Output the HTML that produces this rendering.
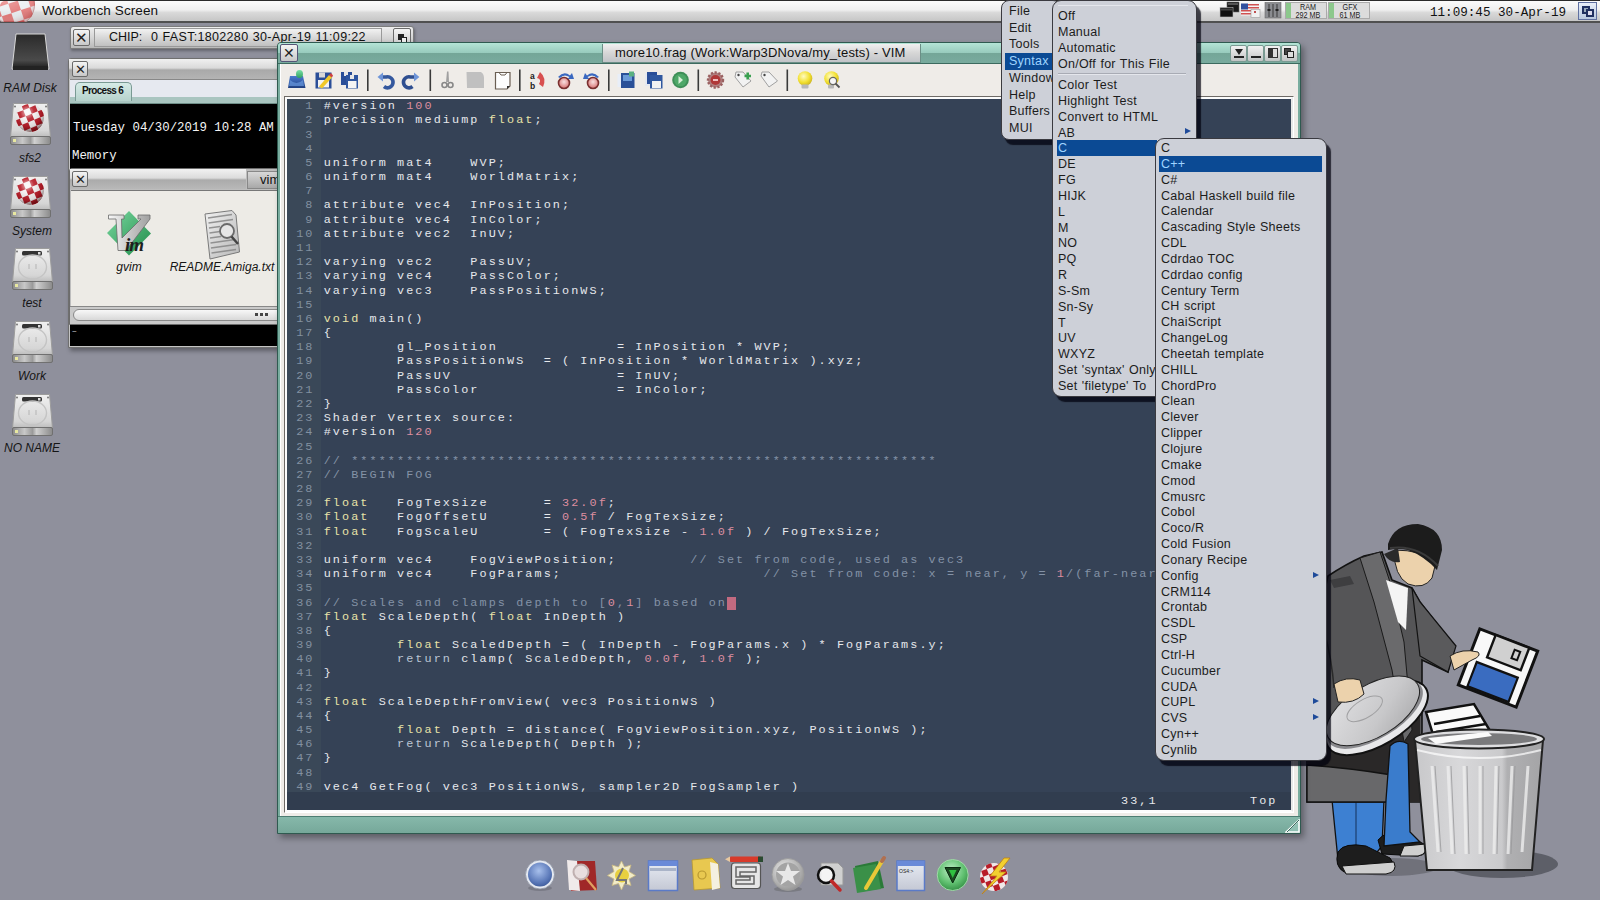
<!DOCTYPE html><html><head><meta charset="utf-8"><style>
*{margin:0;padding:0;box-sizing:border-box}
html,body{width:1600px;height:900px;overflow:hidden;background:#8f909c;font-family:"Liberation Sans",sans-serif;position:relative}
.a{position:absolute}
.code{position:absolute;white-space:pre;font-family:"Liberation Mono",monospace;font-size:11.8px;letter-spacing:2.085px;color:#e6e8ec;line-height:14px;height:14px}
.ln{color:#8290a0}
.k{color:#e8e2a8}
.n{color:#dc8ea0}
.c{color:#8492a6}
.r{color:#bcc6d4}
.mi{position:absolute;font-size:12.5px;letter-spacing:0.25px;word-spacing:0.6px;color:#1c1c1c;white-space:pre;line-height:16px}
.hl{background:#0b4a94;color:#9fd4ff}
.lbl{position:absolute;font-style:italic;font-size:12px;color:#151515;white-space:nowrap;text-align:center}
.btn{position:absolute;background:linear-gradient(#f4f4f4,#dcdcdc 55%,#c8c8c8);border:1px solid #6a6a6a;border-radius:2px}
.x{position:absolute;font-size:15px;line-height:15px;color:#222;text-align:center;width:100%}
</style></head><body>
<div class="a" style="left:0;top:0;width:1600px;height:23px;background:linear-gradient(#fbfbfb,#efefef 45%,#d9d9d9 58%,#c6c6c6);border-top:1px solid #2a2a2a;border-bottom:2px solid #505050"></div>
<div class="a" style="left:0;top:1px;width:38px;height:21px;overflow:hidden;border-radius:5px 0 0 0">
<svg width="38" height="21" viewBox="0 0 38 21"><defs><clipPath id="tbc"><circle cx="14" cy="4" r="21"/></clipPath>
<radialGradient id="tbs" cx=".3" cy=".2" r=".8"><stop offset="0" stop-color="#fff" stop-opacity=".35"/><stop offset=".7" stop-color="#fff" stop-opacity="0"/><stop offset="1" stop-color="#800" stop-opacity=".25"/></radialGradient></defs>
<g clip-path="url(#tbc)" opacity=".75"><rect x="-10" y="-20" width="60" height="50" fill="#e8eef2"/><g transform="rotate(-18 14 4)"><rect x="-21" y="-29" width="10" height="10" fill="#e05a5a"/><rect x="-21" y="-9" width="10" height="10" fill="#e05a5a"/><rect x="-21" y="11" width="10" height="10" fill="#e05a5a"/><rect x="-21" y="31" width="10" height="10" fill="#e05a5a"/><rect x="-11" y="-19" width="10" height="10" fill="#e05a5a"/><rect x="-11" y="1" width="10" height="10" fill="#e05a5a"/><rect x="-11" y="21" width="10" height="10" fill="#e05a5a"/><rect x="-1" y="-29" width="10" height="10" fill="#e05a5a"/><rect x="-1" y="-9" width="10" height="10" fill="#e05a5a"/><rect x="-1" y="11" width="10" height="10" fill="#e05a5a"/><rect x="-1" y="31" width="10" height="10" fill="#e05a5a"/><rect x="9" y="-19" width="10" height="10" fill="#e05a5a"/><rect x="9" y="1" width="10" height="10" fill="#e05a5a"/><rect x="9" y="21" width="10" height="10" fill="#e05a5a"/><rect x="19" y="-29" width="10" height="10" fill="#e05a5a"/><rect x="19" y="-9" width="10" height="10" fill="#e05a5a"/><rect x="19" y="11" width="10" height="10" fill="#e05a5a"/><rect x="19" y="31" width="10" height="10" fill="#e05a5a"/><rect x="29" y="-19" width="10" height="10" fill="#e05a5a"/><rect x="29" y="1" width="10" height="10" fill="#e05a5a"/><rect x="29" y="21" width="10" height="10" fill="#e05a5a"/><rect x="39" y="-29" width="10" height="10" fill="#e05a5a"/><rect x="39" y="-9" width="10" height="10" fill="#e05a5a"/><rect x="39" y="11" width="10" height="10" fill="#e05a5a"/><rect x="39" y="31" width="10" height="10" fill="#e05a5a"/></g><circle cx="14" cy="4" r="21" fill="url(#tbs)"/></g>
<circle cx="14" cy="4" r="20.5" fill="none" stroke="#a05050" stroke-width=".8" opacity=".5"/></svg></div>
<div class="a" style="left:42px;top:3px;font-size:13.5px;color:#111;letter-spacing:0.1px">Workbench Screen</div>
<svg class="a" style="left:1218px;top:1px" width="64" height="20" viewBox="1218 1 64 20">
<rect x="1227" y="2" width="12" height="10" fill="#1a1a1a" stroke="#666" stroke-width=".6"/><rect x="1228" y="3" width="10" height="2" fill="#555"/>
<rect x="1220" y="7.5" width="13" height="9.5" fill="#101010" stroke="#bbb" stroke-width=".6"/><rect x="1221" y="8.5" width="11" height="2" fill="#444"/>
<rect x="1241" y="3.5" width="18" height="12" fill="#f4f4f4"/><g fill="#d05050"><rect x="1241" y="4" width="18" height="1.5"/><rect x="1241" y="7" width="18" height="1.5"/><rect x="1241" y="10" width="18" height="1.5"/><rect x="1241" y="13" width="18" height="1.5"/></g>
<rect x="1241" y="3.5" width="7" height="6" fill="#3050a0"/><rect x="1251" y="9.5" width="9" height="8" fill="#f0f0f0" stroke="#999" stroke-width=".6"/><rect x="1254" y="11" width="2" height="2" fill="#c05050"/>
<rect x="1265" y="2.5" width="16" height="15.5" fill="#8a8c90" stroke="#6a6a6a" stroke-width=".6"/><path d="M1269 4 L1269 17 M1273 4 L1273 17 M1277 4 L1277 17" stroke="#3a3a3a" stroke-width="1"/><rect x="1267.5" y="9" width="3" height="2" fill="#222"/><rect x="1275.5" y="9" width="3" height="2" fill="#222"/>
</svg>
<div class="a" style="left:1285px;top:2px;width:42px;height:17px;background:#dcdcdc;border:1px solid #aaa"></div>
<div class="a" style="left:1286px;top:3px;width:5px;height:15px;background:#8cc88c"></div>
<div class="a" style="left:1291px;top:2.5px;font-size:8.5px;line-height:8px;color:#222;text-align:center;width:34px;transform:scaleX(.85)">RAM<br>292 MB</div>
<div class="a" style="left:1328px;top:2px;width:42px;height:17px;background:#dcdcdc;border:1px solid #aaa"></div>
<div class="a" style="left:1329px;top:3px;width:5px;height:15px;background:#8cc88c"></div>
<div class="a" style="left:1333px;top:2.5px;font-size:8.5px;line-height:8px;color:#222;text-align:center;width:34px;transform:scaleX(.85)">GFX<br>61 MB</div>
<div class="a" style="left:1430px;top:5.5px;font-family:'Liberation Mono',monospace;font-size:12.6px;color:#111;letter-spacing:0px">11:09:45 30-Apr-19</div>
<div class="a" style="left:1578px;top:2px;width:19px;height:18px;background:linear-gradient(#e8eef8,#b8c8e0);border:1px solid #6070a0"></div>
<div class="a" style="left:1582px;top:6px;width:8px;height:8px;border:2px solid #203060;background:#9ab"></div>
<div class="a" style="left:1586px;top:9px;width:8px;height:8px;border:2px solid #203060;background:#dde"></div>
<div class="a" style="left:10px;top:33px;width:41px;height:40px"><svg width="41" height="40" viewBox="0 0 41 40">
<defs><linearGradient id="rg" x1="0" y1="0" x2="0" y2="1"><stop offset="0" stop-color="#2a2a2a"/><stop offset=".75" stop-color="#4a4a4a"/><stop offset="1" stop-color="#1a1a1a"/></linearGradient></defs>
<path d="M6 1 L35 1 L39 36 L2 36Z" fill="url(#rg)" stroke="#d8d8d8" stroke-width="1"/><rect x="3" y="33" width="35" height="4" fill="#222"/></svg></div>
<div class="lbl" style="left:0;top:80.5px;width:60px">RAM Disk</div>
<div class="a" style="left:10px;top:103px;width:41px;height:42px"><svg width="41" height="42" viewBox="0 0 41 42"><defs><linearGradient id="hgd10_103" x1="0" y1="0" x2="0" y2="1"><stop offset="0" stop-color="#f0f0f0"/><stop offset="0.8" stop-color="#d6d6d6"/><stop offset="1" stop-color="#bcbcbc"/></linearGradient><linearGradient id="hsd10_103" x1="0" y1="0" x2="1" y2="0"><stop offset="0" stop-color="#8a8a8a"/><stop offset=".3" stop-color="#c8c8c8"/><stop offset=".5" stop-color="#9a9a9a"/><stop offset=".6" stop-color="#d0d0d0"/><stop offset="1" stop-color="#8a8a8a"/></linearGradient></defs><path d="M3.5 0.5 L37.5 0.5 L40.5 34 L0.5 34Z" fill="url(#hgd10_103)" stroke="#9c9c9c" stroke-width="1"/><rect x="0.5" y="33.5" width="40" height="8" rx="1.5" fill="url(#hsd10_103)" stroke="#707070" stroke-width="1"/><rect x="3" y="36" width="3" height="3" fill="#e8e8a0"/><circle cx="5" cy="3.5" r="1" fill="#777"/><circle cx="36" cy="3.5" r="1" fill="#777"/><defs><clipPath id="bcd10_103"><circle cx="20" cy="15" r="14"/></clipPath><radialGradient id="shd10_103" cx=".4" cy=".3" r=".7"><stop offset="0" stop-color="#fff" stop-opacity=".75"/><stop offset=".35" stop-color="#fff" stop-opacity=".1"/><stop offset=".75" stop-color="#000" stop-opacity=".1"/><stop offset="1" stop-color="#300" stop-opacity=".55"/></radialGradient></defs><g clip-path="url(#bcd10_103)"><rect x="0" y="0" width="41" height="34" fill="#f4f0f0"/><g transform="rotate(-22 20 15)"><rect x="-9.2" y="-14.2" width="6.5" height="6.5" fill="#b81c28"/><rect x="-9.2" y="-1.2" width="6.5" height="6.5" fill="#b81c28"/><rect x="-9.2" y="11.8" width="6.5" height="6.5" fill="#b81c28"/><rect x="-9.2" y="24.8" width="6.5" height="6.5" fill="#b81c28"/><rect x="-9.2" y="37.8" width="6.5" height="6.5" fill="#b81c28"/><rect x="-2.8" y="-7.8" width="6.5" height="6.5" fill="#b81c28"/><rect x="-2.8" y="5.2" width="6.5" height="6.5" fill="#b81c28"/><rect x="-2.8" y="18.2" width="6.5" height="6.5" fill="#b81c28"/><rect x="-2.8" y="31.2" width="6.5" height="6.5" fill="#b81c28"/><rect x="3.8" y="-14.2" width="6.5" height="6.5" fill="#b81c28"/><rect x="3.8" y="-1.2" width="6.5" height="6.5" fill="#b81c28"/><rect x="3.8" y="11.8" width="6.5" height="6.5" fill="#b81c28"/><rect x="3.8" y="24.8" width="6.5" height="6.5" fill="#b81c28"/><rect x="3.8" y="37.8" width="6.5" height="6.5" fill="#b81c28"/><rect x="10.2" y="-7.8" width="6.5" height="6.5" fill="#b81c28"/><rect x="10.2" y="5.2" width="6.5" height="6.5" fill="#b81c28"/><rect x="10.2" y="18.2" width="6.5" height="6.5" fill="#b81c28"/><rect x="10.2" y="31.2" width="6.5" height="6.5" fill="#b81c28"/><rect x="16.8" y="-14.2" width="6.5" height="6.5" fill="#b81c28"/><rect x="16.8" y="-1.2" width="6.5" height="6.5" fill="#b81c28"/><rect x="16.8" y="11.8" width="6.5" height="6.5" fill="#b81c28"/><rect x="16.8" y="24.8" width="6.5" height="6.5" fill="#b81c28"/><rect x="16.8" y="37.8" width="6.5" height="6.5" fill="#b81c28"/><rect x="23.2" y="-7.8" width="6.5" height="6.5" fill="#b81c28"/><rect x="23.2" y="5.2" width="6.5" height="6.5" fill="#b81c28"/><rect x="23.2" y="18.2" width="6.5" height="6.5" fill="#b81c28"/><rect x="23.2" y="31.2" width="6.5" height="6.5" fill="#b81c28"/><rect x="29.8" y="-14.2" width="6.5" height="6.5" fill="#b81c28"/><rect x="29.8" y="-1.2" width="6.5" height="6.5" fill="#b81c28"/><rect x="29.8" y="11.8" width="6.5" height="6.5" fill="#b81c28"/><rect x="29.8" y="24.8" width="6.5" height="6.5" fill="#b81c28"/><rect x="29.8" y="37.8" width="6.5" height="6.5" fill="#b81c28"/><rect x="36.2" y="-7.8" width="6.5" height="6.5" fill="#b81c28"/><rect x="36.2" y="5.2" width="6.5" height="6.5" fill="#b81c28"/><rect x="36.2" y="18.2" width="6.5" height="6.5" fill="#b81c28"/><rect x="36.2" y="31.2" width="6.5" height="6.5" fill="#b81c28"/><rect x="42.8" y="-14.2" width="6.5" height="6.5" fill="#b81c28"/><rect x="42.8" y="-1.2" width="6.5" height="6.5" fill="#b81c28"/><rect x="42.8" y="11.8" width="6.5" height="6.5" fill="#b81c28"/><rect x="42.8" y="24.8" width="6.5" height="6.5" fill="#b81c28"/><rect x="42.8" y="37.8" width="6.5" height="6.5" fill="#b81c28"/></g><circle cx="20" cy="15" r="14" fill="url(#shd10_103)"/></g></svg></div><div class="lbl" style="left:0;top:151px;width:60px">sfs2</div>
<div class="a" style="left:10px;top:176px;width:41px;height:42px"><svg width="41" height="42" viewBox="0 0 41 42"><defs><linearGradient id="hgd10_176" x1="0" y1="0" x2="0" y2="1"><stop offset="0" stop-color="#f0f0f0"/><stop offset="0.8" stop-color="#d6d6d6"/><stop offset="1" stop-color="#bcbcbc"/></linearGradient><linearGradient id="hsd10_176" x1="0" y1="0" x2="1" y2="0"><stop offset="0" stop-color="#8a8a8a"/><stop offset=".3" stop-color="#c8c8c8"/><stop offset=".5" stop-color="#9a9a9a"/><stop offset=".6" stop-color="#d0d0d0"/><stop offset="1" stop-color="#8a8a8a"/></linearGradient></defs><path d="M3.5 0.5 L37.5 0.5 L40.5 34 L0.5 34Z" fill="url(#hgd10_176)" stroke="#9c9c9c" stroke-width="1"/><rect x="0.5" y="33.5" width="40" height="8" rx="1.5" fill="url(#hsd10_176)" stroke="#707070" stroke-width="1"/><rect x="3" y="36" width="3" height="3" fill="#e8e8a0"/><circle cx="5" cy="3.5" r="1" fill="#777"/><circle cx="36" cy="3.5" r="1" fill="#777"/><defs><clipPath id="bcd10_176"><circle cx="20" cy="15" r="14"/></clipPath><radialGradient id="shd10_176" cx=".4" cy=".3" r=".7"><stop offset="0" stop-color="#fff" stop-opacity=".75"/><stop offset=".35" stop-color="#fff" stop-opacity=".1"/><stop offset=".75" stop-color="#000" stop-opacity=".1"/><stop offset="1" stop-color="#300" stop-opacity=".55"/></radialGradient></defs><g clip-path="url(#bcd10_176)"><rect x="0" y="0" width="41" height="34" fill="#f4f0f0"/><g transform="rotate(-22 20 15)"><rect x="-9.2" y="-14.2" width="6.5" height="6.5" fill="#b81c28"/><rect x="-9.2" y="-1.2" width="6.5" height="6.5" fill="#b81c28"/><rect x="-9.2" y="11.8" width="6.5" height="6.5" fill="#b81c28"/><rect x="-9.2" y="24.8" width="6.5" height="6.5" fill="#b81c28"/><rect x="-9.2" y="37.8" width="6.5" height="6.5" fill="#b81c28"/><rect x="-2.8" y="-7.8" width="6.5" height="6.5" fill="#b81c28"/><rect x="-2.8" y="5.2" width="6.5" height="6.5" fill="#b81c28"/><rect x="-2.8" y="18.2" width="6.5" height="6.5" fill="#b81c28"/><rect x="-2.8" y="31.2" width="6.5" height="6.5" fill="#b81c28"/><rect x="3.8" y="-14.2" width="6.5" height="6.5" fill="#b81c28"/><rect x="3.8" y="-1.2" width="6.5" height="6.5" fill="#b81c28"/><rect x="3.8" y="11.8" width="6.5" height="6.5" fill="#b81c28"/><rect x="3.8" y="24.8" width="6.5" height="6.5" fill="#b81c28"/><rect x="3.8" y="37.8" width="6.5" height="6.5" fill="#b81c28"/><rect x="10.2" y="-7.8" width="6.5" height="6.5" fill="#b81c28"/><rect x="10.2" y="5.2" width="6.5" height="6.5" fill="#b81c28"/><rect x="10.2" y="18.2" width="6.5" height="6.5" fill="#b81c28"/><rect x="10.2" y="31.2" width="6.5" height="6.5" fill="#b81c28"/><rect x="16.8" y="-14.2" width="6.5" height="6.5" fill="#b81c28"/><rect x="16.8" y="-1.2" width="6.5" height="6.5" fill="#b81c28"/><rect x="16.8" y="11.8" width="6.5" height="6.5" fill="#b81c28"/><rect x="16.8" y="24.8" width="6.5" height="6.5" fill="#b81c28"/><rect x="16.8" y="37.8" width="6.5" height="6.5" fill="#b81c28"/><rect x="23.2" y="-7.8" width="6.5" height="6.5" fill="#b81c28"/><rect x="23.2" y="5.2" width="6.5" height="6.5" fill="#b81c28"/><rect x="23.2" y="18.2" width="6.5" height="6.5" fill="#b81c28"/><rect x="23.2" y="31.2" width="6.5" height="6.5" fill="#b81c28"/><rect x="29.8" y="-14.2" width="6.5" height="6.5" fill="#b81c28"/><rect x="29.8" y="-1.2" width="6.5" height="6.5" fill="#b81c28"/><rect x="29.8" y="11.8" width="6.5" height="6.5" fill="#b81c28"/><rect x="29.8" y="24.8" width="6.5" height="6.5" fill="#b81c28"/><rect x="29.8" y="37.8" width="6.5" height="6.5" fill="#b81c28"/><rect x="36.2" y="-7.8" width="6.5" height="6.5" fill="#b81c28"/><rect x="36.2" y="5.2" width="6.5" height="6.5" fill="#b81c28"/><rect x="36.2" y="18.2" width="6.5" height="6.5" fill="#b81c28"/><rect x="36.2" y="31.2" width="6.5" height="6.5" fill="#b81c28"/><rect x="42.8" y="-14.2" width="6.5" height="6.5" fill="#b81c28"/><rect x="42.8" y="-1.2" width="6.5" height="6.5" fill="#b81c28"/><rect x="42.8" y="11.8" width="6.5" height="6.5" fill="#b81c28"/><rect x="42.8" y="24.8" width="6.5" height="6.5" fill="#b81c28"/><rect x="42.8" y="37.8" width="6.5" height="6.5" fill="#b81c28"/></g><circle cx="20" cy="15" r="14" fill="url(#shd10_176)"/></g></svg></div><div class="lbl" style="left:0;top:224px;width:64px">System</div>
<div class="a" style="left:12px;top:248px;width:41px;height:42px"><svg width="41" height="42" viewBox="0 0 41 42"><defs><linearGradient id="hgd12_248" x1="0" y1="0" x2="0" y2="1"><stop offset="0" stop-color="#f0f0f0"/><stop offset="0.8" stop-color="#d6d6d6"/><stop offset="1" stop-color="#bcbcbc"/></linearGradient><linearGradient id="hsd12_248" x1="0" y1="0" x2="1" y2="0"><stop offset="0" stop-color="#8a8a8a"/><stop offset=".3" stop-color="#c8c8c8"/><stop offset=".5" stop-color="#9a9a9a"/><stop offset=".6" stop-color="#d0d0d0"/><stop offset="1" stop-color="#8a8a8a"/></linearGradient></defs><path d="M3.5 0.5 L37.5 0.5 L40.5 34 L0.5 34Z" fill="url(#hgd12_248)" stroke="#9c9c9c" stroke-width="1"/><rect x="0.5" y="33.5" width="40" height="8" rx="1.5" fill="url(#hsd12_248)" stroke="#707070" stroke-width="1"/><rect x="3" y="36" width="3" height="3" fill="#e8e8a0"/><circle cx="5" cy="3.5" r="1" fill="#777"/><circle cx="36" cy="3.5" r="1" fill="#777"/><rect x="10" y="3" width="20" height="4.5" rx="1.5" fill="#333"/><rect x="26" y="4" width="2.5" height="2.5" fill="#ddd"/><ellipse cx="20.5" cy="19" rx="14" ry="12" fill="none" stroke="#c4c4c4" stroke-width="1.4"/><path d="M17 16 L17 21 M24 16 L24 21" stroke="#bbb" stroke-width="1.2"/></svg></div><div class="lbl" style="left:0;top:296px;width:64px">test</div>
<div class="a" style="left:12px;top:321px;width:41px;height:42px"><svg width="41" height="42" viewBox="0 0 41 42"><defs><linearGradient id="hgd12_321" x1="0" y1="0" x2="0" y2="1"><stop offset="0" stop-color="#f0f0f0"/><stop offset="0.8" stop-color="#d6d6d6"/><stop offset="1" stop-color="#bcbcbc"/></linearGradient><linearGradient id="hsd12_321" x1="0" y1="0" x2="1" y2="0"><stop offset="0" stop-color="#8a8a8a"/><stop offset=".3" stop-color="#c8c8c8"/><stop offset=".5" stop-color="#9a9a9a"/><stop offset=".6" stop-color="#d0d0d0"/><stop offset="1" stop-color="#8a8a8a"/></linearGradient></defs><path d="M3.5 0.5 L37.5 0.5 L40.5 34 L0.5 34Z" fill="url(#hgd12_321)" stroke="#9c9c9c" stroke-width="1"/><rect x="0.5" y="33.5" width="40" height="8" rx="1.5" fill="url(#hsd12_321)" stroke="#707070" stroke-width="1"/><rect x="3" y="36" width="3" height="3" fill="#e8e8a0"/><circle cx="5" cy="3.5" r="1" fill="#777"/><circle cx="36" cy="3.5" r="1" fill="#777"/><rect x="10" y="3" width="20" height="4.5" rx="1.5" fill="#333"/><rect x="26" y="4" width="2.5" height="2.5" fill="#ddd"/><ellipse cx="20.5" cy="19" rx="14" ry="12" fill="none" stroke="#c4c4c4" stroke-width="1.4"/><path d="M17 16 L17 21 M24 16 L24 21" stroke="#bbb" stroke-width="1.2"/></svg></div><div class="lbl" style="left:0;top:369px;width:64px">Work</div>
<div class="a" style="left:12px;top:394px;width:41px;height:42px"><svg width="41" height="42" viewBox="0 0 41 42"><defs><linearGradient id="hgd12_394" x1="0" y1="0" x2="0" y2="1"><stop offset="0" stop-color="#f0f0f0"/><stop offset="0.8" stop-color="#d6d6d6"/><stop offset="1" stop-color="#bcbcbc"/></linearGradient><linearGradient id="hsd12_394" x1="0" y1="0" x2="1" y2="0"><stop offset="0" stop-color="#8a8a8a"/><stop offset=".3" stop-color="#c8c8c8"/><stop offset=".5" stop-color="#9a9a9a"/><stop offset=".6" stop-color="#d0d0d0"/><stop offset="1" stop-color="#8a8a8a"/></linearGradient></defs><path d="M3.5 0.5 L37.5 0.5 L40.5 34 L0.5 34Z" fill="url(#hgd12_394)" stroke="#9c9c9c" stroke-width="1"/><rect x="0.5" y="33.5" width="40" height="8" rx="1.5" fill="url(#hsd12_394)" stroke="#707070" stroke-width="1"/><rect x="3" y="36" width="3" height="3" fill="#e8e8a0"/><circle cx="5" cy="3.5" r="1" fill="#777"/><circle cx="36" cy="3.5" r="1" fill="#777"/><rect x="10" y="3" width="20" height="4.5" rx="1.5" fill="#333"/><rect x="26" y="4" width="2.5" height="2.5" fill="#ddd"/><ellipse cx="20.5" cy="19" rx="14" ry="12" fill="none" stroke="#c4c4c4" stroke-width="1.4"/><path d="M17 16 L17 21 M24 16 L24 21" stroke="#bbb" stroke-width="1.2"/></svg></div><div class="lbl" style="left:0;top:441px;width:64px">NO NAME</div>
<div class="a" style="left:70px;top:26px;width:344px;height:23px;background:linear-gradient(#eee,#d6d6d6 50%,#b9b9b9);border:1px solid #7c7c7c;border-radius:3px 3px 0 0;box-shadow:1px 2px 3px rgba(0,0,0,.3)"></div>
<div class="btn" style="left:73px;top:29px;width:17px;height:17px"><div class="x" style="top:0">&#x2715;</div></div>
<div class="a" style="left:94px;top:28px;width:288px;height:19px;background:linear-gradient(#f2f2f2,#d8d8d8 50%,#c0c0c0);border:1px solid #999"></div>
<div class="a" style="left:109px;top:30px;font-size:12.5px;color:#111;white-space:pre;letter-spacing:0px">CHIP:</div><div class="a" style="left:151px;top:30px;font-size:12.5px;color:#111;white-space:pre;letter-spacing:0.32px;word-spacing:0.5px">0 FAST:1802280 30-Apr-19 11:09:22</div>
<div class="btn" style="left:393px;top:28px;width:18px;height:19px"></div><div class="a" style="left:397.5px;top:33.5px;width:6px;height:6px;background:#222"></div><div class="a" style="left:400.5px;top:36.5px;width:6px;height:6px;background:#eee;border:1px solid #222"></div>
<div class="a" style="left:68px;top:58px;width:220px;height:290px;background:#c4c4c4;border:1px solid #6f6f6f;border-radius:3px 3px 0 0;box-shadow:2px 3px 4px rgba(0,0,0,.35)"></div>
<div class="a" style="left:69px;top:59px;width:218px;height:20px;background:linear-gradient(#f0f0f0,#dadada 45%,#a9a9a9 55%,#b4b4b4)"></div>
<div class="btn" style="left:72px;top:61px;width:16px;height:16px"><div class="x" style="top:0;font-size:13px">&#x2715;</div></div>
<div class="a" style="left:70px;top:79px;width:217px;height:25px;background:#e6e9f0;border-top:1px solid #888"></div>
<div class="a" style="left:70px;top:97px;width:217px;height:7px;background:#a9c5c0;border-bottom:1px solid #6e8e88"></div>
<div class="a" style="left:75px;top:82px;width:57px;height:19px;background:linear-gradient(#d6ebe7,#b6d2cc);border:1px solid #7a9a94;border-bottom:none;border-radius:5px 5px 0 0"></div>
<div class="a" style="left:82px;top:84px;font-size:10.5px;font-weight:bold;color:#111;letter-spacing:-0.7px;transform:scaleX(.95);transform-origin:0 0">Process 6</div>
<div class="a" style="left:70px;top:104px;width:217px;height:242px;background:#000"></div>
<div class="a" style="left:73px;top:120.5px;font-family:'Liberation Mono',monospace;font-size:12.4px;color:#f4f4f4;white-space:pre;letter-spacing:0px">Tuesday 04/30/2019 10:28 AM</div>
<div class="a" style="left:72px;top:148.5px;font-family:'Liberation Mono',monospace;font-size:12.4px;color:#f4f4f4;white-space:pre">Memory</div>
<div class="a" style="left:69px;top:168px;width:218px;height:157px;background:#bdbdbd;border:1px solid #6c6c6c;border-radius:3px 3px 0 0"></div>
<div class="a" style="left:70px;top:169px;width:176px;height:20px;background:linear-gradient(#f2f2f2,#dcdcdc 45%,#ababab 55%,#b8b8b8)"></div>
<div class="btn" style="left:72px;top:171px;width:16px;height:16px"><div class="x" style="top:0;font-size:13px">&#x2715;</div></div>
<div class="a" style="left:247px;top:171px;width:40px;height:18px;background:linear-gradient(#d8d8d8,#a8a8a8);border:1px solid #888"></div>
<div class="a" style="left:260px;top:172px;font-size:13px;color:#111">vim</div>
<div class="a" style="left:71px;top:190px;width:216px;height:116px;background:#edebe6;border-top:1px solid #777"></div>
<div class="a" style="left:70px;top:306px;width:217px;height:18px;background:#c9c9c9;border-top:1px solid #888"></div>
<div class="a" style="left:73px;top:309px;width:220px;height:12px;background:linear-gradient(#f8f8f8,#d8d8d8);border:1px solid #8a8a8a;border-radius:6px"></div>
<div class="a" style="left:255px;top:313px;width:3px;height:3px;background:#444"></div><div class="a" style="left:260px;top:313px;width:3px;height:3px;background:#444"></div><div class="a" style="left:265px;top:313px;width:3px;height:3px;background:#444"></div>
<div class="a" style="left:70px;top:325px;width:217px;height:21px;background:#000"></div>
<div class="a" style="left:72px;top:327px;font-size:8px;color:#ddd">~</div>
<svg class="a" style="left:100px;top:205px" width="150" height="58" viewBox="100 205 150 58">
<defs><linearGradient id="vg1" x1="0" y1="0" x2="1" y2="1"><stop offset="0" stop-color="#7ad8a0"/><stop offset="1" stop-color="#1e8a48"/></linearGradient>
<linearGradient id="vg2" x1="0" y1="0" x2="1" y2="0"><stop offset="0" stop-color="#f8f8f8"/><stop offset=".5" stop-color="#c8c8c8"/><stop offset="1" stop-color="#a0a0a0"/></linearGradient>
<linearGradient id="rg1" x1="0" y1="0" x2="1" y2="1"><stop offset="0" stop-color="#f0f0f0"/><stop offset="1" stop-color="#b8b8b8"/></linearGradient></defs>
<path d="M129 211 L151 233.5 L129 255.5 L107 233Z" fill="url(#vg1)"/>
<path d="M108.5 215 L124 215 L124 219 L121.5 219 L122 238 L141 219 L138 219 L138 215 L150 215 L150 219 L126 250.5 L118 250.5 L116 219 L108.5 219Z" fill="url(#vg2)" stroke="#6a6a6a" stroke-width=".8"/>
<text x="125" y="251" font-family="Liberation Serif" font-style="italic" font-weight="bold" font-size="19" fill="#1e1e1e" letter-spacing="-1">im</text>
<path d="M205 214 L232 210.5 L236 215 L239.5 252 L210 259 Z" fill="url(#rg1)" stroke="#7a7a7a" stroke-width="1"/>
<g stroke="#8a8a8a" stroke-width="1.6" opacity=".9"><path d="M208 218 L232 214.5 M208.5 223 L233 219.5 M209 228 L220 226.5 M209.5 233 L220 231.5 M210 238 L221 236.5 M210.5 243 L235 239.5 M211 248 L236 244.5 M211.5 253 L236 249.5"/></g>
<circle cx="227" cy="231" r="7" fill="#e6e6e6" stroke="#6a6a6a" stroke-width="1.8"/><path d="M231.5 236.5 L238 244" stroke="#444" stroke-width="2.5"/>
</svg>
<div class="lbl" style="left:100px;top:260px;width:58px">gvim</div>
<div class="lbl" style="left:168px;top:260px;width:108px">README.Amiga.txt</div>
<svg class="a" style="left:1300px;top:510px" width="270" height="380" viewBox="-20 0 270 380">
<defs>
<linearGradient id="can" x1="0" y1="0" x2="1" y2="0"><stop offset="0" stop-color="#c8c8ca"/><stop offset=".35" stop-color="#d8d8da"/><stop offset=".68" stop-color="#cacacc"/><stop offset=".72" stop-color="#b0b0b2"/><stop offset="1" stop-color="#a4a4a6"/></linearGradient>
<linearGradient id="lid" x1="0" y1="0" x2="1" y2="1"><stop offset="0" stop-color="#e2e2e4"/><stop offset=".6" stop-color="#c8c8ca"/><stop offset="1" stop-color="#a8a8aa"/></linearGradient>
</defs>
<ellipse cx="182" cy="354" rx="56" ry="14" fill="#55575f" opacity=".85"/>
<ellipse cx="72" cy="357" rx="46" ry="9" fill="#62646c" opacity=".7"/>
<!-- front leg -->
<path d="M12 290 L64 290 L62 336 L54 346 L18 350 Z" fill="#3d80d2" stroke="#111" stroke-width="1.3"/>
<path d="M36 292 L36 346" stroke="#14305a" stroke-width="1"/>
<!-- shoes -->
<path d="M58 330 Q66 320 84 324 L104 334 Q110 344 98 346 L62 344Z" fill="#1d1d1d" stroke="#0a0a0a"/>
<path d="M84 336 L106 334 Q108 344 98 346 L80 346Z" fill="#cfcfcf" stroke="#111"/>
<path d="M18 342 Q24 332 46 336 L70 348 Q78 358 66 362 L24 362 Q14 356 18 342Z" fill="#1d1d1d" stroke="#0a0a0a"/>
<path d="M22 356 L74 352 Q78 362 66 364 L26 364Z" fill="#cfcfcf" stroke="#111"/>
<!-- coat body -->
<path d="M8 66 Q26 54 44 46 L62 42 L72 70 L92 78 L100 92 L134 136 L128 162 L102 150 L102 220 L100 292 L-13 292 L-13 160 Z" fill="#555557" stroke="#121212" stroke-width="1.6"/>
<!-- dark inner under lid -->
<path d="M-13 232 L100 200 L100 292 L-13 292Z" fill="#2a2828"/>
<!-- skirt -->
<path d="M-13 255 Q30 258 72 265 L72 292 L-13 292Z" fill="#68686a" stroke="#121212" stroke-width="1.4"/>
<!-- back leg (his left) -->
<path d="M70 236 Q78 228 88 234 L90 322 L100 332 L64 336 L66 290 Z" fill="#3a7ccc" stroke="#111" stroke-width="1.3"/>
<!-- lapel -->
<path d="M40 48 L60 42 L70 72 L84 132 L92 220 L84 232 L72 160 L54 92 Z" fill="#6a6a6c" stroke="#1a1a1a" stroke-width="1"/>
<path d="M10 70 L30 66 L34 74 L14 78Z" fill="#3e3e40"/>
<!-- sleeve -->
<path d="M92 78 L100 92 L136 136 L128 162 L100 146Z" fill="#5a5a5c" stroke="#121212" stroke-width="1.2"/>
<path d="M4 120 Q12 150 14 178" stroke="#2a2a2a" stroke-width="1.5" fill="none"/>
<!-- shirt -->
<path d="M66 70 L88 78 L86 120 L78 112Z" fill="#f4f4f4"/>
<!-- head -->
<path d="M74 40 Q74 66 88 74 Q104 80 112 68 L116 52 Q102 40 74 40Z" fill="#ecd2ac" stroke="#222" stroke-width="1"/>
<path d="M64 44 Q70 54 80 52 L78 38Z" fill="#2a2a2a"/>
<path d="M68 34 Q74 14 98 14 Q122 18 122 40 L117 60 Q104 46 88 40 Q78 38 68 40Z" fill="#1c1c1c"/>
<path d="M70 38 Q98 34 118 56" stroke="#3a3a3a" stroke-width="2" fill="none"/>
<!-- floppy -->
<g transform="translate(178,158) rotate(21)">
<rect x="-31" y="-30" width="62" height="60" fill="#f8f8f8" stroke="#111" stroke-width="3"/>
<rect x="-14" y="-30" width="36" height="24" fill="#d0d0d0" stroke="#111" stroke-width="2.4"/>
<rect x="8" y="-24" width="8" height="11" fill="#111"/><rect x="10" y="-22" width="4" height="7" fill="#d0d0d0"/>
<rect x="-22" y="2" width="44" height="26" fill="#3a6cc0" stroke="#111" stroke-width="2.2"/>
</g>
<path d="M130 146 Q142 138 158 142 Q162 146 152 150 L134 160Z" fill="#ecd2ac" stroke="#222" stroke-width="1"/>
<!-- lid -->
<g transform="translate(56,206) rotate(-31)">
<ellipse cx="0" cy="2" rx="57" ry="27" fill="#e8e8ea" stroke="#111" stroke-width="2"/>
<ellipse cx="0" cy="-2" rx="54" ry="24" fill="#8a8a8e"/>
<ellipse cx="0" cy="-6" rx="52" ry="26" fill="url(#lid)" stroke="#222" stroke-width="1"/>
<ellipse cx="-6" cy="-12" rx="20" ry="9" fill="none" stroke="#a0a0a2" stroke-width="1"/>
</g>
<path d="M14 174 Q26 166 40 170 L44 184 Q34 194 18 192Z" fill="#ecd2ac" stroke="#222" stroke-width="1"/>
<!-- papers -->
<path d="M106 202 L154 194 L172 224 L116 234Z" fill="#fafafa" stroke="#111" stroke-width="2.5"/>
<path d="M114 214 L160 206 M116 222 L166 214 M118 230 L170 222" stroke="#111" stroke-width="2.4"/>
<path d="M160 224 L184 222 L188 230 L164 232Z" fill="#fafafa" stroke="#111" stroke-width="1.5"/>
<!-- trash can -->
<path d="M95 230 L223 230 L212 360 L107 360Z" fill="url(#can)" stroke="#222" stroke-width="2"/>
<g stroke="#eeeeee" stroke-width="3" opacity=".8"><path d="M112 256 L118 342 M128 256 L132 344 M144 256 L146 344 M160 256 L160 344 M176 256 L174 344 M192 256 L188 344 M208 256 L202 342"/></g>
<g stroke="#9a9a9c" stroke-width="1" opacity=".8"><path d="M115 256 L121 342 M131 256 L135 344 M147 256 L149 344 M163 256 L163 344 M179 256 L177 344 M195 256 L191 344"/></g>
<path d="M97 240 Q159 256 221 240" stroke="#fff" stroke-width="2" fill="none" opacity=".7"/>
<ellipse cx="159" cy="229" rx="65" ry="9.5" fill="#dedee0" stroke="#222" stroke-width="2"/>
<ellipse cx="159" cy="229" rx="58" ry="6" fill="#7a7a7c"/>
<path d="M108 228 L116 234 L172 226 L168 222Z" fill="#fafafa"/>
</svg>
<svg class="a" style="left:500px;top:845px" width="540" height="55" viewBox="500 845 540 55">
<defs>
<radialGradient id="dk0" cx=".45" cy=".35" r=".7"><stop offset="0" stop-color="#a8c0ec"/><stop offset=".7" stop-color="#5a78b8"/><stop offset="1" stop-color="#3a5898"/></radialGradient>
<radialGradient id="dk6" cx=".4" cy=".35" r=".75"><stop offset="0" stop-color="#eeeeee"/><stop offset="1" stop-color="#8c8c8c"/></radialGradient>
<radialGradient id="dk10" cx=".45" cy=".35" r=".7"><stop offset="0" stop-color="#c0f0c8"/><stop offset=".6" stop-color="#60c070"/><stop offset="1" stop-color="#2f8a40"/></radialGradient>
<linearGradient id="dkw" x1="0" y1="0" x2="0" y2="1"><stop offset="0" stop-color="#e8ecf4"/><stop offset="1" stop-color="#c4c8d4"/></linearGradient>
<clipPath id="dkb"><circle cx="994" cy="877" r="14"/></clipPath>
</defs>
<ellipse cx="540" cy="888" rx="12" ry="3" fill="#6a6c76" opacity=".6"/>
<circle cx="540" cy="874.5" r="14.5" fill="#e4e8f0" stroke="#8a90a0" stroke-width=".8"/><circle cx="540" cy="874.5" r="12" fill="url(#dk0)"/>
<path d="M569 861 L595 861 L597 890 L571 891Z" fill="#a02828"/><path d="M567 860 L577 861 L580 891 L569 890Z" fill="#f0eaea"/>
<circle cx="581" cy="872" r="7.5" fill="#e8dede" stroke="#c0b0b0" stroke-width="2"/><path d="M586 878 L596 890" stroke="#e0a060" stroke-width="2.2"/>
<path d="M621.5 861 L624.5 867 L631 865 L629 871.5 L635.5 875.5 L629 879 L631 885.5 L624.5 883.5 L621.5 890 L618.5 883.5 L612 885.5 L614 879 L607.5 875.5 L614 871.5 L612 865 L618.5 867Z" fill="#f2ecc8" stroke="#c8b880" stroke-width=".8"/>
<circle cx="622" cy="875.5" r="7" fill="#e8d040"/><path d="M623 868 L617 880 L626 880 L626 884" stroke="#777" stroke-width="2" fill="none"/>
<rect x="648.5" y="861" width="29" height="29.5" fill="url(#dkw)" stroke="#5a7ac8" stroke-width="1.5"/><rect x="648.5" y="861" width="29" height="5" fill="#6a8ad8"/><rect x="650" y="868" width="26" height="3" fill="#aab4c8"/>
<path d="M692 860 L712 858 L718 864 L720 888 L694 890Z" fill="#e8c850" stroke="#b89830" stroke-width=".8"/><path d="M710 862 L718 864 L720 888 L712 890Z" fill="#f4f0e0"/><circle cx="702" cy="875" r="4" fill="none" stroke="#b89830" stroke-width="1.2"/>
<rect x="731.5" y="863" width="29" height="25.5" rx="3" fill="#e6e6e6" stroke="#555" stroke-width="1.2"/>
<path d="M740 867 L756 867 L756 872 L740 872 L740 876 L754 876 L754 884 L736 884 L736 880 L750 880 L750 877 L736 877 L736 867Z" fill="none" stroke="#666" stroke-width="1.5"/>
<rect x="730" y="856.5" width="31" height="5.5" rx="1" fill="#d83a2a"/><rect x="758" y="856.5" width="5" height="5.5" fill="#2a4a30"/><path d="M730 856.5 L725 859.25 L730 862Z" fill="#e8c8a0"/>
<ellipse cx="788" cy="889" rx="14" ry="3" fill="#707278" opacity=".7"/>
<circle cx="788" cy="874.5" r="16" fill="url(#dk6)" stroke="#9a9a9a" stroke-width=".8"/><circle cx="788" cy="874.5" r="12" fill="#a4a4a4"/>
<path d="M788 863 L791 871 L800 871 L793 876.5 L795.5 885 L788 880 L780.5 885 L783 876.5 L776 871 L785 871Z" fill="#e8e8e8"/>
<path d="M821 863 L838 863 L843 868 L843 885 L821 885Z" fill="#d0d0d0" stroke="#999"/>
<circle cx="826" cy="875" r="8" fill="#fafafa" fill-opacity=".85" stroke="#111" stroke-width="2.5"/><path d="M831.5 881 L840 890" stroke="#c02828" stroke-width="3.5" stroke-linecap="round"/>
<path d="M855 866 L878 861 L884 888 L859 892Z" fill="#2a7a38"/><path d="M853 868 L876 864 L881 889 L857 893Z" fill="#3a9048"/>
<path d="M866 888 L882 861" stroke="#e8c838" stroke-width="4" stroke-linecap="round"/><path d="M882 861 L884 858" stroke="#b07050" stroke-width="4" stroke-linecap="round"/>
<rect x="897" y="861" width="27.5" height="29.5" fill="url(#dkw)" stroke="#5a7ac8" stroke-width="1.5"/><rect x="897" y="861" width="27.5" height="5" fill="#6a8ad8"/>
<text x="899" y="872.5" font-size="5" fill="#222" font-family="Liberation Sans">OS4:&gt;</text>
<circle cx="952.7" cy="875" r="15.5" fill="url(#dk10)" stroke="#a0d8a8" stroke-width="1"/><path d="M945 867.5 L960.5 867.5 L952.7 883Z" fill="#1a4a20" stroke="#0a2a10"/><path d="M949 870 L956.5 870 L952.7 878Z" fill="#30c040"/>
<circle cx="994" cy="877" r="14" fill="#f0e8e8"/>
<g clip-path="url(#dkb)" transform="rotate(-20 994 877)" fill="#b81c28">
<rect x="978" y="861" width="6" height="6"/><rect x="990" y="861" width="6" height="6"/><rect x="1002" y="861" width="6" height="6"/>
<rect x="984" y="867" width="6" height="6"/><rect x="996" y="867" width="6" height="6"/><rect x="1008" y="867" width="6" height="6"/>
<rect x="978" y="873" width="6" height="6"/><rect x="990" y="873" width="6" height="6"/><rect x="1002" y="873" width="6" height="6"/>
<rect x="984" y="879" width="6" height="6"/><rect x="996" y="879" width="6" height="6"/><rect x="1008" y="879" width="6" height="6"/>
<rect x="978" y="885" width="6" height="6"/><rect x="990" y="885" width="6" height="6"/><rect x="1002" y="885" width="6" height="6"/>
</g>
<path d="M1004 858 L990 876 L997 876 L982 894 L1006 872 L999 872 L1010 858Z" fill="#f2d030" stroke="#c08010" stroke-width=".8"/>

</svg>
<div class="a" style="left:277px;top:42px;width:1024px;height:792px;background:#79ad9f;border:1px solid #2f5a50;border-radius:4px 4px 0 0;box-shadow:3px 4px 6px rgba(0,0,0,.35)"></div>
<div class="a" style="left:278px;top:43px;width:1022px;height:21px;background:linear-gradient(#b4e4d6,#98cbbd 48%,#74a698 52%,#79ab9e);border-bottom:1px solid #3c6a5f;border-radius:3px 3px 0 0"></div>
<div class="btn" style="left:280px;top:44px;width:18px;height:18px;border-color:#557"><div class="x" style="top:1px;font-size:14px">&#x2715;</div></div>
<div class="a" style="left:602px;top:44px;width:319px;height:19px;background:linear-gradient(#f0f0f0,#d6d6d6 50%,#c2c4c8);border:1px solid #6b8f86;border-top:none"></div>
<div class="a" style="left:615px;top:45px;font-size:13px;color:#111;white-space:pre;letter-spacing:0.15px">more10.frag (Work:Warp3DNova/my_tests) - VIM</div>

<div class="btn" style="left:1230px;top:45px;width:17px;height:17px;border-color:#7a9a92;background:linear-gradient(#f2f2f2,#d8d8d8 55%,#c0c4c4)"></div>
<div class="btn" style="left:1247px;top:45px;width:17px;height:17px;border-color:#7a9a92;background:linear-gradient(#f2f2f2,#d8d8d8 55%,#c0c4c4)"></div>
<div class="btn" style="left:1264px;top:45px;width:17px;height:17px;border-color:#7a9a92;background:linear-gradient(#f2f2f2,#d8d8d8 55%,#c0c4c4)"></div>
<div class="btn" style="left:1281px;top:45px;width:17px;height:17px;border-color:#7a9a92;background:linear-gradient(#f2f2f2,#d8d8d8 55%,#c0c4c4)"></div>
<div class="a" style="left:1235px;top:49px;width:0;height:0;border-left:4px solid transparent;border-right:4px solid transparent;border-top:6px solid #222"></div>
<div class="a" style="left:1234px;top:56px;width:10px;height:2px;background:#222"></div>
<div class="a" style="left:1251px;top:56px;width:10px;height:2px;background:#222"></div>
<div class="a" style="left:1268px;top:48px;width:10px;height:10px;border:1px solid #333;background:linear-gradient(90deg,#333 45%,#ddd 45%)"></div>
<div class="a" style="left:1284px;top:48px;width:7px;height:7px;border:1px solid #222;background:#444"></div>
<div class="a" style="left:1287px;top:51px;width:7px;height:7px;border:1px solid #222;background:#ddd"></div>

<div class="a" style="left:280px;top:64px;width:1018px;height:753px;background:#efece8;border-left:1px solid #fff"></div>
<div class="a" style="left:284px;top:96px;width:1010px;height:717px;border-top:1px solid #6e6a66;border-left:1px solid #6e6a66;border-right:1px solid #fff;border-bottom:1px solid #fff"></div>
<div class="a" style="left:285px;top:97px;width:1008px;height:715px;border:2px solid #fcfcfc;border-right-color:#e8e8e8"></div>
<div class="a" style="left:287px;top:99px;width:1004px;height:711px;background:#313d4f"></div>
<div class="a" style="left:287px;top:99px;width:1004px;height:693px;background:#354256"></div>
<div class="a" style="left:287px;top:99px;width:34px;height:693px;background:#3a4858"></div>
<div class="a" style="left:278px;top:816px;width:1022px;height:17px;background:linear-gradient(#86b8aa,#76a89a);border-top:1px solid #4d7d72"></div>
<svg class="a" style="left:1285px;top:819px" width="16" height="15" viewBox="0 0 16 15"><path d="M14 1 L14 13 L1 13Z" fill="#8fbfb2" stroke="#fff" stroke-width="1.5"/><path d="M2 13 L14 1" stroke="#3d6a5f" stroke-width="1"/></svg>

<svg class="a" style="left:280px;top:64px" width="580" height="32" viewBox="280 64 580 32">
<defs>
<linearGradient id="tb1" x1="0" y1="0" x2="0" y2="1"><stop offset="0" stop-color="#4a7ad0"/><stop offset="1" stop-color="#1f3f80"/></linearGradient>
<linearGradient id="tbg" x1="0" y1="0" x2="0" y2="1"><stop offset="0" stop-color="#7ae0a8"/><stop offset="1" stop-color="#30a060"/></linearGradient>
<radialGradient id="tbp" cx=".5" cy=".4" r=".6"><stop offset="0" stop-color="#f8e0e0"/><stop offset="1" stop-color="#d87070"/></radialGradient>
<radialGradient id="tby" cx=".4" cy=".35" r=".7"><stop offset="0" stop-color="#fffbc0"/><stop offset=".6" stop-color="#f2e030"/><stop offset="1" stop-color="#c8b020"/></radialGradient>
</defs>
<path d="M290 76 L303 76 L305.5 88 L288 88Z" fill="url(#tb1)"/><path d="M290 80 Q296.5 86 303 80 L304 86 L289 86Z" fill="#6a9ae0" opacity=".7"/>
<ellipse cx="299.5" cy="74" rx="3.5" ry="4" fill="url(#tbg)"/>
<rect x="315.5" y="72.5" width="16" height="16" fill="#2a4e98"/><rect x="318" y="80" width="11" height="7.5" fill="#f2f2f2"/><rect x="319" y="72.5" width="6" height="5" fill="#d8d8d8"/>
<path d="M319 86.5 L329 75 L332 77.5 L322 88.5Z" fill="#f0c828"/><path d="M329 75 L331 73 L333 75.5 L332 77.5Z" fill="#d04040"/>
<rect x="341" y="72" width="11" height="13" fill="#2a4e98"/><rect x="344" y="72" width="4" height="4" fill="#e8e8e8"/>
<rect x="346" y="75" width="12" height="13.5" fill="#2f56a0"/><rect x="348" y="81" width="8.5" height="7" fill="#f4f4f4"/><rect x="350" y="75" width="4" height="4" fill="#e8e8e8"/>
<rect x="367" y="69.5" width="1.6" height="21.5" fill="#3a3a3a"/>
<path d="M380 77 L386 77 A5.5 5.5 0 1 1 384 86.5" fill="none" stroke="#34589e" stroke-width="3.6"/><path d="M377.5 77 L383 72.5 L383 81.5Z" fill="#6f95d8"/>
<path d="M416.5 77 L410.5 77 A5.5 5.5 0 1 0 412.5 86.5" fill="none" stroke="#2f4f90" stroke-width="3.6"/><path d="M419.4 77 L414 72.5 L414 81.5Z" fill="#6f95d8"/>
<rect x="429.5" y="69.5" width="1.6" height="21.5" fill="#3a3a3a"/>
<circle cx="444.5" cy="85" r="2.5" fill="none" stroke="#888" stroke-width="1.6"/><circle cx="450.5" cy="85" r="2.5" fill="none" stroke="#888" stroke-width="1.6"/><path d="M446 82 L447 71.5 L448.5 71.5 L449 82" fill="#a0a0a0"/>
<path d="M466.5 72 L481 72 Q484 74 484 78 L484 88 L467 88Z" fill="#c0c0c0"/>
<path d="M495.5 72.5 L510 72.5 L510 86 L507 89 L495.5 89Z" fill="#fdfdfd" stroke="#6a5e52" stroke-width="1.2"/><path d="M507 89 L510 86 L507 86Z" fill="#333"/><path d="M499 72.5 L501 75 L505 75 L507 72.5" fill="none" stroke="#6a5e52"/>
<rect x="519" y="69.5" width="1.6" height="21.5" fill="#3a3a3a"/>
<text x="530" y="78.5" font-family="Liberation Sans" font-weight="bold" font-size="8.5" fill="#1a1a1a">a</text><text x="530" y="88.5" font-family="Liberation Sans" font-weight="bold" font-size="8.5" fill="#1a1a1a">b</text>
<path d="M540 72 Q547 78 543 87 L539 84 Q542 79 537 78Z" fill="#d85050"/>
<circle cx="564" cy="83" r="5.5" fill="url(#tbp)" stroke="#7a3030" stroke-width="1.6"/><path d="M558 77 Q564 70.5 570 75.5 L572 73 L574 79 L567.5 79 L569.5 77 Q564 73.5 560 78Z" fill="#3a68c0"/>
<circle cx="593" cy="83" r="5.5" fill="url(#tbp)" stroke="#7a3030" stroke-width="1.6"/><path d="M599 77 Q593 70.5 587 75.5 L585 73 L583 79 L589.5 79 L587.5 77 Q593 73.5 597 78Z" fill="#3a68c0"/>
<rect x="608" y="69.5" width="1.6" height="21.5" fill="#3a3a3a"/>
<rect x="617.5" y="74" width="4" height="13" fill="#e8eef8"/><rect x="621" y="73" width="13.5" height="15" fill="#2a5098"/><rect x="623" y="75" width="9" height="6" fill="#6a9ad8"/><rect x="629" y="71.5" width="5" height="5" fill="#5ab080"/>
<rect x="645" y="73" width="5" height="13" fill="#e4e8f0"/><rect x="647" y="72" width="10" height="12" fill="#2a4e98"/><rect x="650" y="75" width="12.5" height="13.5" fill="#3058a0"/><rect x="652" y="81" width="9" height="7" fill="#f2f2f2"/>
<circle cx="680.5" cy="80" r="8.3" fill="#3f8f58"/><circle cx="680.5" cy="80" r="6.3" fill="#4ea868"/><path d="M678.5 76 L683 80 L678.5 84Z" fill="#d8f0d8"/>
<rect x="697.5" y="69.5" width="1.6" height="21.5" fill="#3a3a3a"/>
<circle cx="715.5" cy="80" r="7.5" fill="#b08080" stroke="#9a6060" stroke-width="2.4" stroke-dasharray="2.2 1.6"/><circle cx="715.5" cy="80" r="5" fill="#b03838"/><rect x="713" y="79" width="5" height="2" fill="#f0c0c0"/>
<path d="M735 77 L743 87 L751 81 L743 72 L736 72Z" fill="#f2f2f2" stroke="#a0a0a0"/><circle cx="738.5" cy="75" r="1.2" fill="#444"/><path d="M744.5 76 L751 76 M747.7 72.5 L747.7 79.5" stroke="#3aa050" stroke-width="2.6"/>
<path d="M761 76 L769 87 L777.5 81 L769 72 L762 72Z" fill="#f2f2f2" stroke="#a0a0a0"/><circle cx="764.5" cy="75" r="1.2" fill="#444"/>
<rect x="786.5" y="69.5" width="1.6" height="21.5" fill="#3a3a3a"/>
<circle cx="805" cy="78.5" r="7.3" fill="url(#tby)"/><rect x="801.5" y="84.5" width="7" height="4" rx="1" fill="#b8b8b8"/>
<circle cx="831.5" cy="78.5" r="7.3" fill="url(#tby)"/><rect x="828" y="84.5" width="6" height="4" rx="1" fill="#b8b8b8"/><circle cx="833" cy="81" r="3.6" fill="#f6f6f6" stroke="#666" stroke-width="1.2"/><path d="M835.5 83.5 L839.5 87.5" stroke="#555" stroke-width="1.8"/>
</svg>
<div class="code" style="left:287.04px;top:99.20px"><span class="ln">  1 </span>#version <span class="n">100</span></div>
<div class="code" style="left:287.04px;top:113.38px"><span class="ln">  2 </span>precision mediump <span class="k">float</span>;</div>
<div class="code" style="left:287.04px;top:127.56px"><span class="ln">  3 </span></div>
<div class="code" style="left:287.04px;top:141.74px"><span class="ln">  4 </span></div>
<div class="code" style="left:287.04px;top:155.92px"><span class="ln">  5 </span>uniform mat4    WVP;</div>
<div class="code" style="left:287.04px;top:170.10px"><span class="ln">  6 </span>uniform mat4    WorldMatrix;</div>
<div class="code" style="left:287.04px;top:184.28px"><span class="ln">  7 </span></div>
<div class="code" style="left:287.04px;top:198.46px"><span class="ln">  8 </span>attribute vec4  InPosition;</div>
<div class="code" style="left:287.04px;top:212.64px"><span class="ln">  9 </span>attribute vec4  InColor;</div>
<div class="code" style="left:287.04px;top:226.82px"><span class="ln"> 10 </span>attribute vec2  InUV;</div>
<div class="code" style="left:287.04px;top:241.00px"><span class="ln"> 11 </span></div>
<div class="code" style="left:287.04px;top:255.18px"><span class="ln"> 12 </span>varying vec2    PassUV;</div>
<div class="code" style="left:287.04px;top:269.36px"><span class="ln"> 13 </span>varying vec4    PassColor;</div>
<div class="code" style="left:287.04px;top:283.54px"><span class="ln"> 14 </span>varying vec3    PassPositionWS;</div>
<div class="code" style="left:287.04px;top:297.72px"><span class="ln"> 15 </span></div>
<div class="code" style="left:287.04px;top:311.90px"><span class="ln"> 16 </span><span class="k">void</span> main()</div>
<div class="code" style="left:287.04px;top:326.08px"><span class="ln"> 17 </span>{</div>
<div class="code" style="left:287.04px;top:340.26px"><span class="ln"> 18 </span>        gl_Position             = InPosition * WVP;</div>
<div class="code" style="left:287.04px;top:354.44px"><span class="ln"> 19 </span>        PassPositionWS  = ( InPosition * WorldMatrix ).xyz;</div>
<div class="code" style="left:287.04px;top:368.62px"><span class="ln"> 20 </span>        PassUV                  = InUV;</div>
<div class="code" style="left:287.04px;top:382.80px"><span class="ln"> 21 </span>        PassColor               = InColor;</div>
<div class="code" style="left:287.04px;top:396.98px"><span class="ln"> 22 </span>}</div>
<div class="code" style="left:287.04px;top:411.16px"><span class="ln"> 23 </span>Shader Vertex source:</div>
<div class="code" style="left:287.04px;top:425.34px"><span class="ln"> 24 </span>#version <span class="n">120</span></div>
<div class="code" style="left:287.04px;top:439.52px"><span class="ln"> 25 </span></div>
<div class="code" style="left:287.04px;top:453.70px"><span class="ln"> 26 </span><span class="c">// ****************************************************************</span></div>
<div class="code" style="left:287.04px;top:467.88px"><span class="ln"> 27 </span><span class="c">// BEGIN FOG</span></div>
<div class="code" style="left:287.04px;top:482.06px"><span class="ln"> 28 </span></div>
<div class="code" style="left:287.04px;top:496.24px"><span class="ln"> 29 </span><span class="k">float</span>   FogTexSize      = <span class="n">32.0f</span>;</div>
<div class="code" style="left:287.04px;top:510.42px"><span class="ln"> 30 </span><span class="k">float</span>   FogOffsetU      = <span class="n">0.5f</span> / FogTexSize;</div>
<div class="code" style="left:287.04px;top:524.60px"><span class="ln"> 31 </span><span class="k">float</span>   FogScaleU       = ( FogTexSize - <span class="n">1.0f</span> ) / FogTexSize;</div>
<div class="code" style="left:287.04px;top:538.78px"><span class="ln"> 32 </span></div>
<div class="code" style="left:287.04px;top:552.96px"><span class="ln"> 33 </span>uniform vec4    FogViewPosition;        <span class="c">// Set from code, used as vec3</span></div>
<div class="code" style="left:287.04px;top:567.14px"><span class="ln"> 34 </span>uniform vec4    FogParams;                      <span class="c">// Set from code: x = near, y = </span><span class="n">1</span><span class="c">/(far-near)</span></div>
<div class="code" style="left:287.04px;top:581.32px"><span class="ln"> 35 </span></div>
<div class="code" style="left:287.04px;top:595.50px"><span class="ln"> 36 </span><span class="c">// Scales and clamps depth to [</span><span class="n">0</span><span class="c">,</span><span class="n">1</span><span class="c">] based on</span></div>
<div class="code" style="left:287.04px;top:609.68px"><span class="ln"> 37 </span><span class="k">float</span> ScaleDepth( <span class="k">float</span> InDepth )</div>
<div class="code" style="left:287.04px;top:623.86px"><span class="ln"> 38 </span>{</div>
<div class="code" style="left:287.04px;top:638.04px"><span class="ln"> 39 </span>        <span class="k">float</span> ScaledDepth = ( InDepth - FogParams.x ) * FogParams.y;</div>
<div class="code" style="left:287.04px;top:652.22px"><span class="ln"> 40 </span>        <span class="r">return</span> clamp( ScaledDepth, <span class="n">0.0f</span>, <span class="n">1.0f</span> );</div>
<div class="code" style="left:287.04px;top:666.40px"><span class="ln"> 41 </span>}</div>
<div class="code" style="left:287.04px;top:680.58px"><span class="ln"> 42 </span></div>
<div class="code" style="left:287.04px;top:694.76px"><span class="ln"> 43 </span><span class="k">float</span> ScaleDepthFromView( vec3 PositionWS )</div>
<div class="code" style="left:287.04px;top:708.94px"><span class="ln"> 44 </span>{</div>
<div class="code" style="left:287.04px;top:723.12px"><span class="ln"> 45 </span>        <span class="k">float</span> Depth = distance( FogViewPosition.xyz, PositionWS );</div>
<div class="code" style="left:287.04px;top:737.30px"><span class="ln"> 46 </span>        <span class="r">return</span> ScaleDepth( Depth );</div>
<div class="code" style="left:287.04px;top:751.48px"><span class="ln"> 47 </span>}</div>
<div class="code" style="left:287.04px;top:765.66px"><span class="ln"> 48 </span></div>
<div class="code" style="left:287.04px;top:779.84px"><span class="ln"> 49 </span>vec4 GetFog( vec3 PositionWS, sampler2D FogSampler )</div>
<div class="a" style="left:726.96px;top:596.50px;width:9px;height:13px;background:#c26a80"></div>
<div class="code" style="left:1121px;top:794px">33,1</div><div class="code" style="left:1250px;top:794px">Top</div>
<div class="a" style="left:1001px;top:0px;width:60px;height:140px;background:#cdd0d8;border:1px solid #3a3a40;border-radius:8px 8px 8px 8px;box-shadow:4px 5px 1px rgba(0,0,12,.72)"></div>
<div class="a" style="left:1005px;top:53px;width:48px;height:17px;background:#0b4a94"></div>
<div class="mi" style="left:1009px;top:3.0px;color:#1c1c1c">File</div>
<div class="mi" style="left:1009px;top:19.7px;color:#1c1c1c">Edit</div>
<div class="mi" style="left:1009px;top:36.4px;color:#1c1c1c">Tools</div>
<div class="mi" style="left:1009px;top:53.1px;color:#9fd4ff">Syntax</div>
<div class="mi" style="left:1009px;top:69.8px;color:#1c1c1c">Window</div>
<div class="mi" style="left:1009px;top:86.5px;color:#1c1c1c">Help</div>
<div class="mi" style="left:1009px;top:103.2px;color:#1c1c1c">Buffers</div>
<div class="mi" style="left:1009px;top:119.9px;color:#1c1c1c">MUI</div>
<div class="a" style="left:1052px;top:0px;width:145px;height:397px;background:#cdd0d8;border:1px solid #3a3a40;border-radius:9px;box-shadow:4px 5px 1px rgba(0,0,12,.72)"></div>
<div class="a" style="left:1058px;top:5px;width:130px;height:1px;background:#e4e6ec"></div>
<div class="a" style="left:1058px;top:73px;width:128px;height:1px;background:#a8abb4"></div>
<div class="a" style="left:1058px;top:74px;width:128px;height:1px;background:#e4e6ec"></div>
<div class="a" style="left:1057px;top:140px;width:100px;height:16px;background:#0b4a94"></div>
<div class="mi" style="left:1058px;top:8.0px">Off</div>
<div class="mi" style="left:1058px;top:23.8px">Manual</div>
<div class="mi" style="left:1058px;top:39.7px">Automatic</div>
<div class="mi" style="left:1058px;top:55.5px">On/Off for This File</div>
<div class="mi" style="left:1058px;top:77.0px;color:#1c1c1c">Color Test</div>
<div class="mi" style="left:1058px;top:92.8px;color:#1c1c1c">Highlight Test</div>
<div class="mi" style="left:1058px;top:108.7px;color:#1c1c1c">Convert to HTML</div>
<div class="mi" style="left:1058px;top:124.5px;color:#1c1c1c">AB</div>
<div class="mi" style="left:1058px;top:140.4px;color:#9fd4ff">C</div>
<div class="mi" style="left:1058px;top:156.2px;color:#1c1c1c">DE</div>
<div class="mi" style="left:1058px;top:172.0px;color:#1c1c1c">FG</div>
<div class="mi" style="left:1058px;top:187.9px;color:#1c1c1c">HIJK</div>
<div class="mi" style="left:1058px;top:203.7px;color:#1c1c1c">L</div>
<div class="mi" style="left:1058px;top:219.6px;color:#1c1c1c">M</div>
<div class="mi" style="left:1058px;top:235.4px;color:#1c1c1c">NO</div>
<div class="mi" style="left:1058px;top:251.2px;color:#1c1c1c">PQ</div>
<div class="mi" style="left:1058px;top:267.1px;color:#1c1c1c">R</div>
<div class="mi" style="left:1058px;top:282.9px;color:#1c1c1c">S-Sm</div>
<div class="mi" style="left:1058px;top:298.8px;color:#1c1c1c">Sn-Sy</div>
<div class="mi" style="left:1058px;top:314.6px;color:#1c1c1c">T</div>
<div class="mi" style="left:1058px;top:330.4px;color:#1c1c1c">UV</div>
<div class="mi" style="left:1058px;top:346.3px;color:#1c1c1c">WXYZ</div>
<div class="mi" style="left:1058px;top:362.1px;color:#1c1c1c">Set &#x27;syntax&#x27; Only</div>
<div class="mi" style="left:1058px;top:378.0px;color:#1c1c1c">Set &#x27;filetype&#x27; To</div>
<div class="a" style="left:1185px;top:128px;width:0;height:0;border-top:3.5px solid transparent;border-bottom:3.5px solid transparent;border-left:6px solid #1e4a9a"></div>
<div class="a" style="left:1155px;top:138px;width:172px;height:623px;background:#cdd0d8;border:1px solid #3a3a40;border-radius:9px;box-shadow:4px 5px 1px rgba(0,0,12,.72)"></div>
<div class="a" style="left:1159px;top:156px;width:163px;height:16px;background:#0b4a94"></div>
<div class="mi" style="left:1161px;top:140.0px;color:#1c1c1c">C</div>
<div class="mi" style="left:1161px;top:155.8px;color:#9fd4ff">C++</div>
<div class="mi" style="left:1161px;top:171.7px;color:#1c1c1c">C#</div>
<div class="mi" style="left:1161px;top:187.5px;color:#1c1c1c">Cabal Haskell build file</div>
<div class="mi" style="left:1161px;top:203.4px;color:#1c1c1c">Calendar</div>
<div class="mi" style="left:1161px;top:219.2px;color:#1c1c1c">Cascading Style Sheets</div>
<div class="mi" style="left:1161px;top:235.0px;color:#1c1c1c">CDL</div>
<div class="mi" style="left:1161px;top:250.9px;color:#1c1c1c">Cdrdao TOC</div>
<div class="mi" style="left:1161px;top:266.7px;color:#1c1c1c">Cdrdao config</div>
<div class="mi" style="left:1161px;top:282.6px;color:#1c1c1c">Century Term</div>
<div class="mi" style="left:1161px;top:298.4px;color:#1c1c1c">CH script</div>
<div class="mi" style="left:1161px;top:314.2px;color:#1c1c1c">ChaiScript</div>
<div class="mi" style="left:1161px;top:330.1px;color:#1c1c1c">ChangeLog</div>
<div class="mi" style="left:1161px;top:345.9px;color:#1c1c1c">Cheetah template</div>
<div class="mi" style="left:1161px;top:361.8px;color:#1c1c1c">CHILL</div>
<div class="mi" style="left:1161px;top:377.6px;color:#1c1c1c">ChordPro</div>
<div class="mi" style="left:1161px;top:393.4px;color:#1c1c1c">Clean</div>
<div class="mi" style="left:1161px;top:409.3px;color:#1c1c1c">Clever</div>
<div class="mi" style="left:1161px;top:425.1px;color:#1c1c1c">Clipper</div>
<div class="mi" style="left:1161px;top:441.0px;color:#1c1c1c">Clojure</div>
<div class="mi" style="left:1161px;top:456.8px;color:#1c1c1c">Cmake</div>
<div class="mi" style="left:1161px;top:472.6px;color:#1c1c1c">Cmod</div>
<div class="mi" style="left:1161px;top:488.5px;color:#1c1c1c">Cmusrc</div>
<div class="mi" style="left:1161px;top:504.3px;color:#1c1c1c">Cobol</div>
<div class="mi" style="left:1161px;top:520.2px;color:#1c1c1c">Coco/R</div>
<div class="mi" style="left:1161px;top:536.0px;color:#1c1c1c">Cold Fusion</div>
<div class="mi" style="left:1161px;top:551.8px;color:#1c1c1c">Conary Recipe</div>
<div class="mi" style="left:1161px;top:567.7px;color:#1c1c1c">Config</div>
<div class="a" style="left:1313px;top:571.7px;width:0;height:0;border-top:3.5px solid transparent;border-bottom:3.5px solid transparent;border-left:6px solid #1e4a9a"></div>
<div class="mi" style="left:1161px;top:583.5px;color:#1c1c1c">CRM114</div>
<div class="mi" style="left:1161px;top:599.4px;color:#1c1c1c">Crontab</div>
<div class="mi" style="left:1161px;top:615.2px;color:#1c1c1c">CSDL</div>
<div class="mi" style="left:1161px;top:631.0px;color:#1c1c1c">CSP</div>
<div class="mi" style="left:1161px;top:646.9px;color:#1c1c1c">Ctrl-H</div>
<div class="mi" style="left:1161px;top:662.7px;color:#1c1c1c">Cucumber</div>
<div class="mi" style="left:1161px;top:678.6px;color:#1c1c1c">CUDA</div>
<div class="mi" style="left:1161px;top:694.4px;color:#1c1c1c">CUPL</div>
<div class="a" style="left:1313px;top:698.4px;width:0;height:0;border-top:3.5px solid transparent;border-bottom:3.5px solid transparent;border-left:6px solid #1e4a9a"></div>
<div class="mi" style="left:1161px;top:710.2px;color:#1c1c1c">CVS</div>
<div class="a" style="left:1313px;top:714.2px;width:0;height:0;border-top:3.5px solid transparent;border-bottom:3.5px solid transparent;border-left:6px solid #1e4a9a"></div>
<div class="mi" style="left:1161px;top:726.1px;color:#1c1c1c">Cyn++</div>
<div class="mi" style="left:1161px;top:741.9px;color:#1c1c1c">Cynlib</div></body></html>
